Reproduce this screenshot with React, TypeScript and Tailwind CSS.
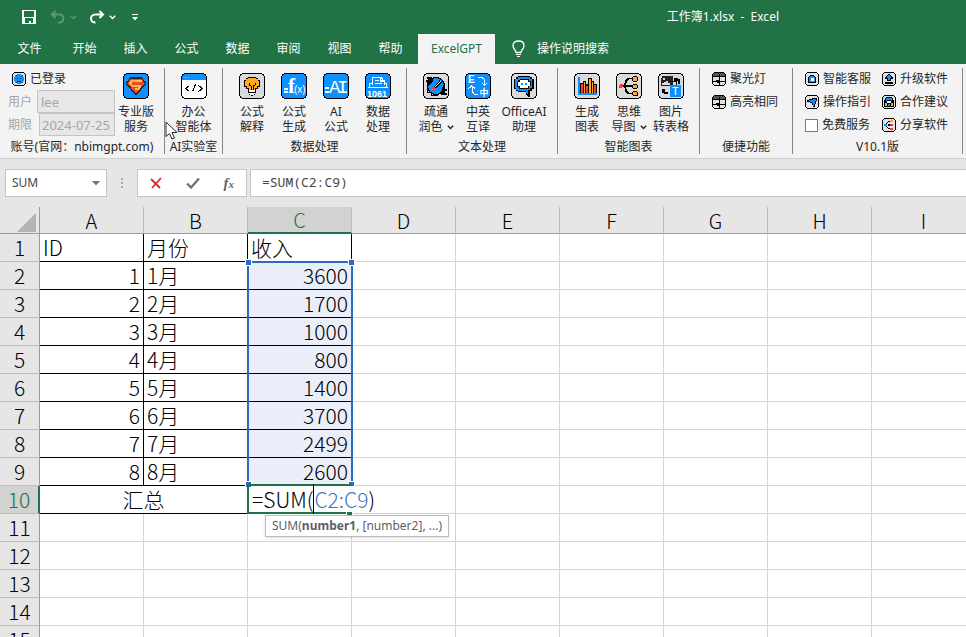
import type { ReactNode } from 'react';
import clsx from 'clsx';

const BLUE = '#0d90ff';
const GREY = '#dadada';

const tabs = ['开始', '插入', '公式', '数据', '审阅', '视图', '帮助'];
const columns = ['A', 'B', 'C', 'D', 'E', 'F', 'G', 'H', 'I'];
const income = ['3600', '1700', '1000', '800', '1400', '3700', '2499', '2600'];
const emptyRows = [11, 12, 13, 14, 15];

/* ---------- icons ---------- */

function Tile({ fill, children }: { fill: string; children: ReactNode }) {
  return (
    <svg width="26" height="26" viewBox="0 0 26 26" fill="none" shapeRendering="crispEdges" aria-hidden="true">
      <path d="M3 0h20v1h2v2h1v20h-1v2h-2v1H3v-1H1v-2H0V3h1V1h2z" fill="#000" />
      <path d="M3 1h20v1h1v1h1v20h-1v1h-1v1H3v-1H2v-1H1V3h1V2h1z" fill={fill} />
      {children}
    </svg>
  );
}

function SmallTile({ children }: { children: ReactNode }) {
  return (
    <svg width="14" height="14" viewBox="0 0 14 14" fill="none" shapeRendering="crispEdges" className="shrink-0" aria-hidden="true">
      <path d="M2 0h10v1h1v1h1v10h-1v1h-1v1H2v-1H1v-1H0V2h1V1h1z" fill="#000" />
      <path d="M2 1h10v1h1v10h-1v1H2v-1H1V2h1z" fill="#e2e2e2" />
      {children}
    </svg>
  );
}

const ShieldIcon = () => (
  <Tile fill={BLUE}>
    <path d="M7.5 5h11l4 5.500L13 22 3.500 10.500z" fill="#f04438" stroke="#222" strokeWidth="1.3" />
    <path d="M19 7.500H9.500L7 10l2 2.500h8l.5 1.500-2 1.500h-4" stroke="#ffc02e" strokeWidth="2" />
  </Tile>
);

const CodeIcon = () => (
  <Tile fill="#fff">
    <path d="M1 7V3h1V2h1V1h20v1h1v1h1v4z" fill={BLUE} />
    <path d="M4 4.500h1M7 4.500h1" stroke="#ffb27a" />
    <path d="M8.500 12.500l-3.500 3 3.500 3M17.500 12.500l3.500 3-3.500 3M14.500 11.500l-3 7" stroke="#000" strokeWidth="1.2" />
  </Tile>
);

const BulbIcon = () => (
  <Tile fill={GREY}>
    <path d="M9 4h8v1h2v2h2v7h-2v2h-2v2H9v-2H7v-2H5V7h2V5h2z" fill="#000" />
    <path d="M9 5h8v1h2v2h1v5h-2v2h-2v2h-6v-2H8v-2H6V8h1V6h2z" fill="#ffac1c" />
    <path d="M10 10v2l2 1v4M16 10v2l-2 1v4" stroke="#000" />
    <path d="M9 17h8v3h-1v2h-2v1h-2v-1h-2v-2H9z" fill="#000" />
    <path d="M10 17h6v2h-6zM10 20h6v1h-1v1h-4v-1h-1z" fill="#fff" />
  </Tile>
);

const FormulaIcon = () => (
  <Tile fill={BLUE}>
    <path d="M3 15h4v2H3zM3 18h4v2H3z" fill="#fff" />
    <text x="7" y="20" fill="#fff" fontSize="21" fontWeight="bold" fontFamily="Liberation Serif, serif">f</text>
    <text x="13" y="20" fill="#fff" fontSize="10" fontFamily="Liberation Sans, sans-serif">(x)</text>
  </Tile>
);

const AiIcon = () => (
  <Tile fill={BLUE}>
    <path d="M2 14h4v2H2zM2 18h4v2H2z" fill="#fff" />
    <text x="6" y="20" fill="#fff" fontSize="19" fontFamily="Liberation Mono, monospace">A</text>
    <text x="14" y="20" fill="#fff" fontSize="19" fontFamily="Liberation Mono, monospace">I</text>
    <path d="M23 18h1v2h-1z" fill="#fff" />
  </Tile>
);

const DataIcon = () => (
  <Tile fill={BLUE}>
    <path d="M7.500 12V4.500h8l2 1v2h2V12M15.500 4v4h4M10 7.500h4M10 10.500h7M7 10.500H4.500v4M19 10.500h2.500v4M3 14.500h20" stroke="#fff" strokeWidth="1.2" />
    <text x="2" y="24" fill="#fff" fontSize="9" fontFamily="Liberation Sans, sans-serif" fontWeight="bold">1061</text>
  </Tile>
);

const PolishIcon = () => (
  <Tile fill={GREY}>
    <circle cx="13" cy="13" r="8.500" fill={BLUE} stroke="#000" strokeWidth="1.2" />
    <path d="M4 4h4l2 1v3L6 12H4V9H3V7h2V6H4zM16 20l3-3 1-5h2v4h2v2h-2v2h2v2h-5z" fill="#000" />
    <path d="M5.500 8.500q0 3-1 6v5h4v3h6l2-2" stroke="#000" strokeWidth="1.2" />
    <path d="M10 17l8-9" stroke="#000" strokeWidth="3" />
    <path d="M12 14l6-6" stroke="#fff" />
    <path d="M10 14h2v1h1v2h-1v1h-2v-1H9v-2h1z" fill="#ef3f57" />
  </Tile>
);

const TranslateIcon = () => (
  <Tile fill={BLUE}>
    <path d="M3.500 15.500l3-2.500 4 2.500M7.500 13.500V19l2 2.500H13M13 4.500h4l2.500 2v6M17 10l2.500 2.500L22 10" stroke="#fff" strokeWidth="1.2" />
    <text x="3" y="10" fill="#fff" fontSize="10" fontWeight="bold" fontFamily="Liberation Sans, sans-serif">E</text>
    <text x="14.500" y="22.500" fill="#fff" fontSize="9" fontWeight="bold" fontFamily="'Noto Sans CJK SC', sans-serif">中</text>
  </Tile>
);

const ChatIcon = () => (
  <Tile fill={GREY}>
    <path d="M7 3h12v1h2v2h2v10h-2v2h-2v6h-2l-2-2v-3H7v-1H5v-2H3V6h2V4h2z" fill="#000" />
    <path d="M7 4h12v2h2v9h-2v2h-2v5l-2-2v-2H7v-1H5v-2H4V6h3z" fill={BLUE} />
    <path d="M9 6h9v2h2v5h-2v3H8v-2H6V9h1V7h2z" fill="#000" />
    <path d="M9 7h8v2h2v4h-2v2H9v-2H7V9h2z" fill="#fff" />
    <path d="M10 10h2v2h-2zM14 10h2v2h-2z" fill={BLUE} />
  </Tile>
);

const ChartIcon = () => (
  <Tile fill={GREY}>
    <path d="M6 10h4v10H6zM9 8h3v12H9zM12 11h3v9h-3zM14 5h4v15h-4zM17 8h3v12h-3zM19 11h4v9h-4z" fill="#000" />
    <path d="M7 11h2v9H7zM12 13h2v7h-2zM20 12h2v8h-2z" fill="#ef3f44" />
    <path d="M10 9h1v11h-1zM15 6h2v14h-2zM18 9h1v11h-1z" fill="#ffac1c" />
    <path d="M4 4h2v16h17v2H4z" fill={BLUE} />
  </Tile>
);

const MindMapIcon = () => (
  <Tile fill={GREY}>
    <path d="M6 13h12M18 5.500h-5l-3 2-1 5 1 6 3 2h5" stroke="#000" strokeWidth="1.8" />
    <circle cx="5" cy="13" r="2" fill="#ef3f44" />
    <path d="M17 3h4v1h1v4h-1v1h-4V8h-1V4h1zM17 11h4v1h1v3h-1v1h-4v-1h-1v-3h1zM17 18h4v1h1v4h-5v-1h-1v-3h1z" fill="#000" />
    <path d="M17 4h4v4h-4zM17 12h4v3h-4zM17 19h4v3h-4z" fill="#ffac1c" />
  </Tile>
);

const PictureIcon = () => (
  <Tile fill={GREY}>
    <path d="M4 3h11v10H3V5h1z" fill="#222" />
    <path d="M5 5h2v2H5zM4 12v-2h2V9h2V8h2v2h2v2z" fill="#ddd" />
    <path d="M16 5h4v1h2v5h-2V8h-4zM4 16h3v3h3v2H6v-1H4z" fill="#000" />
    <path d="M15 8.500h3V12" stroke="#000" />
    <rect x="12" y="12" width="11" height="12" fill={BLUE} />
    <text x="14" y="22" fill="#fff" fontSize="11" fontFamily="Liberation Sans, sans-serif">T</text>
  </Tile>
);

const LoginIcon = () => (
  <SmallTile>
    <path d="M5 2h4v1h2v2h1v4h-1v2H9v1H5v-1H3V9H2V5h1V3h2z" fill={BLUE} />
    <path d="M3.500 3.500h1M9.500 3.500h1M5 6.500h1M8 6.500h1M5 9.500h4M3.500 10.500h1M9.500 10.500h1" stroke="#0a2a52" />
  </SmallTile>
);

const GridIcon = () => (
  <SmallTile>
    <path d="M1 4V2h1V1h10v1h1v2z" fill="#555" />
    <path d="M1 4.500h12M1 9.500h12M7.500 2v11" stroke="#000" />
    <path d="M4 8h3v3H5v-1H4z" fill="#000" />
  </SmallTile>
);

const RobotIcon = () => (
  <SmallTile>
    <path d="M3 11V5h1V4h1V3h4v1h1v1h1v6z" fill="#000" />
    <path d="M4 10V5h1V4h4v1h1v5z" fill={BLUE} />
    <path d="M6 6h3v3H6z" fill="#fff" />
  </SmallTile>
);

const GuideIcon = () => (
  <SmallTile>
    <path d="M2 5h2V4h3V3h5v3h-1v3h-1v3H8v-2H7V8H5V7H2z" fill="#000" />
    <path d="M4 6V5h4V4h3v2h-1v3H9v2H8V8H7V7H5z" fill={BLUE} />
  </SmallTile>
);

const UploadIcon = () => (
  <SmallTile>
    <path d="M6 2h2v1h1v1h1v1h1v2H9v2H5V7H3V5h1V4h1V3h1z" fill="#000" />
    <path d="M6 3h2v1h1v2H8v2H6V6H5V4h1z" fill={BLUE} />
    <path d="M3 10h8v2H3z" fill="#000" />
  </SmallTile>
);

const PartnerIcon = () => (
  <SmallTile>
    <path d="M4 2h6v1h1v2h1v7H2V5h1V3h1z" fill="#000" />
    <path d="M4 3h6v3H9V5H5v1H4zM6 9h2v2H6z" fill={BLUE} />
    <path d="M5 6h4v2H5z" fill="#fff" />
    <path d="M3 8h2v3H3zM9 8h2v3H9z" fill="#ffac1c" />
  </SmallTile>
);

const ShareIcon = () => (
  <SmallTile>
    <path d="M8 3.500H6.500L4 6v2l2.500 2.500H8M6 7h2" stroke="#000" strokeWidth="1.2" />
    <path d="M2 6h3v2H2z" fill={BLUE} />
    <path d="M8 2h3v2H8z" fill="#ffac1c" />
    <path d="M8 6h3v2H8zM8 10h3v2H8z" fill="#e8384f" />
  </SmallTile>
);

const Chevron = () => (
  <svg width="7" height="5" viewBox="0 0 7 5" fill="none" className="inline-block" aria-hidden="true">
    <path d="M0.8 0.8L3.500 3.500 6.200 0.8" stroke="currentColor" strokeWidth="1.4" />
  </svg>
);

/* ---------- ribbon ---------- */

function Group({ title, className, children }: { title: string; className: string; children: ReactNode }) {
  return (
    <section className={clsx('flex shrink-0 flex-col border-r border-[#868686]', className)}>
      <div className="h-[73px] pt-1">{children}</div>
      <h2 className="text-center leading-[14px] whitespace-nowrap">{title}</h2>
    </section>
  );
}

type BigProps = { icon: ReactNode; lines: [string, string]; menu?: boolean; className?: string };

function BigButton({ icon, lines, menu, className = 'w-[42px]' }: BigProps) {
  return (
    <button className={clsx('flex shrink-0 flex-col items-center gap-[5px] pt-px', className)}>
      {icon}
      <span className="leading-[15px] whitespace-nowrap">
        {lines[0]}
        <br />
        {lines[1]}
        {menu && <span className="ml-1 inline-flex align-middle"><Chevron /></span>}
      </span>
    </button>
  );
}

function SmallButton({ icon, label }: { icon: ReactNode; label: string }) {
  return (
    <button className="flex h-[14px] items-center gap-1 leading-[14px] whitespace-nowrap">
      {icon}
      {label}
    </button>
  );
}

function Ribbon() {
  return (
    <div className="flex h-[95px] overflow-hidden border-b border-[#cfcfcf] bg-[#f3f3f3] pt-1 pb-1 text-[#262626]">
      <Group title="账号(官网：nbimgpt.com)" className="w-[165px]">
        <div className="flex pr-[7px] pl-2">
          <div className="flex w-[107px] shrink-0 flex-col">
            <div className="mb-1 pl-1">
              <SmallButton icon={<LoginIcon />} label="已登录" />
            </div>
            <div className="flex items-center justify-between text-[#a6a6a6]">
              <label htmlFor="user">用户</label>
              <input id="user" disabled defaultValue="lee" className="h-[23px] w-[78px] border border-[#c4c4c4] bg-[#e7e7e7] px-[3px] text-[13px]" />
            </div>
            <div className="flex items-center justify-between text-[#a6a6a6]">
              <label htmlFor="expiry">期限</label>
              <input id="expiry" disabled defaultValue="2024-07-25" className="h-[23px] w-[76px] border border-[#c4c4c4] bg-[#e7e7e7] px-[2px] text-[13px]" />
            </div>
          </div>
          <BigButton icon={<ShieldIcon />} lines={['专业版', '服务']} />
        </div>
      </Group>
      <Group title="AI实验室" className="w-[58px]">
        <div className="flex justify-center">
          <BigButton icon={<CodeIcon />} lines={['办公', '智能体']} />
        </div>
      </Group>
      <Group title="数据处理" className="w-[184px]">
        <div className="flex pl-2">
          <BigButton icon={<BulbIcon />} lines={['公式', '解释']} />
          <BigButton icon={<FormulaIcon />} lines={['公式', '生成']} />
          <BigButton icon={<AiIcon />} lines={['AI', '公式']} />
          <BigButton icon={<DataIcon />} lines={['数据', '处理']} />
        </div>
      </Group>
      <Group title="文本处理" className="w-[151px]">
        <div className="flex pl-2">
          <BigButton icon={<PolishIcon />} lines={['疏通', '润色']} menu />
          <BigButton icon={<TranslateIcon />} lines={['中英', '互译']} />
          <BigButton icon={<ChatIcon />} lines={['OfficeAI', '助理']} className="w-[50px]" />
        </div>
      </Group>
      <Group title="智能图表" className="w-[142px]">
        <div className="flex pl-2">
          <BigButton icon={<ChartIcon />} lines={['生成', '图表']} />
          <BigButton icon={<MindMapIcon />} lines={['思维', '导图']} menu />
          <BigButton icon={<PictureIcon />} lines={['图片', '转表格']} />
        </div>
      </Group>
      <Group title="便捷功能" className="w-[93px]">
        <div className="flex flex-col gap-[9px] pl-3">
          <SmallButton icon={<GridIcon />} label="聚光灯" />
          <SmallButton icon={<GridIcon />} label="高亮相同" />
        </div>
      </Group>
      <Group title="V10.1版" className="w-[170px]">
        <div className="flex gap-[11px] pl-3">
          <div className="flex flex-col gap-[9px]">
            <SmallButton icon={<RobotIcon />} label="智能客服" />
            <SmallButton icon={<GuideIcon />} label="操作指引" />
            <label className="flex h-[14px] items-center gap-1 whitespace-nowrap">
              <input type="checkbox" className="size-[13px] appearance-none border border-[#7a7a7a] bg-white" />
              免费服务
            </label>
          </div>
          <div className="flex flex-col gap-[9px]">
            <SmallButton icon={<UploadIcon />} label="升级软件" />
            <SmallButton icon={<PartnerIcon />} label="合作建议" />
            <SmallButton icon={<ShareIcon />} label="分享软件" />
          </div>
        </div>
      </Group>
    </div>
  );
}

/* ---------- title bar and tabs ---------- */

function TitleBar() {
  return (
    <header className="flex h-[34px] items-center pl-[22px] text-white">
      <button aria-label="保存">
        <svg width="14" height="14" viewBox="0 0 14 14" shapeRendering="crispEdges">
          <path fillRule="evenodd" d="M0 0h14v14H0zM2 1h10v6H2zM2 8h10v5H9v-2H7v2H3V9H2z" fill="#fff" />
          <path d="M2 8h1v5H2zM11 8h1v5h-1z" fill="#fff" />
        </svg>
      </button>
      <button aria-label="撤消" className="ml-[14px] text-[#5b9877]">
        <svg width="16" height="14" viewBox="0 0 16 14" fill="none">
          <path d="M5.500 1L2 4.500 5.500 8M2 4.500h7.500c5 0 5 8 0 8H8" stroke="currentColor" strokeWidth="2" />
        </svg>
      </button>
      <button aria-label="撤消选项" className="ml-1 flex text-[#5b9877]"><Chevron /></button>
      <button aria-label="恢复" className="ml-3">
        <svg width="16" height="14" viewBox="0 0 16 14" fill="none">
          <path d="M10.500 1L14 4.500 10.500 8M14 4.500H6.500c-6 0-6 8 0 8" stroke="#fff" strokeWidth="2" />
        </svg>
      </button>
      <button aria-label="恢复选项" className="ml-1 flex"><Chevron /></button>
      <button aria-label="自定义快速访问工具栏" className="ml-4">
        <svg width="6" height="7" viewBox="0 0 6 7">
          <path d="M0 0h6v1H0zM0 3h6L3 6.500z" fill="#fff" />
        </svg>
      </button>
      <h1 className="mr-[187px] ml-auto whitespace-pre">工作簿1.xlsx  -  Excel</h1>
    </header>
  );
}

function TabBar() {
  return (
    <nav className="flex h-[30px] items-stretch pr-4 text-white">
      <button className="w-[59px] pb-px">文件</button>
      {tabs.map((tab) => (
        <button key={tab} className="w-[51px] pb-px">{tab}</button>
      ))}
      <button className="ml-[2px] w-[77px] bg-[#f3f3f3] pb-px text-[#217346]">ExcelGPT</button>
      <button className="ml-[17px] flex items-center gap-3 pb-px">
        <svg width="13" height="17" viewBox="0 0 13 17" fill="none" aria-hidden="true">
          <path d="M4 12.500c0-2.500-3-3.500-3-7C1 2.500 3.500 1 6.500 1S12 2.500 12 5.500c0 3.500-3 4.500-3 7z" stroke="#fff" strokeWidth="1.3" />
          <path d="M4 14.500h5M5 16.500h3" stroke="#fff" />
        </svg>
        操作说明搜索
      </button>
    </nav>
  );
}

/* ---------- formula bar ---------- */

function FormulaBar() {
  return (
    <div className="flex h-12 items-center bg-[#e6e6e6] pl-[5px] text-[#444]">
      <div className="flex h-7 w-[102px] items-center border border-[#c6c6c6] bg-white">
        <input aria-label="名称框" defaultValue="SUM" className="min-w-0 flex-1 pl-[6px] outline-none" />
        <button aria-label="名称列表" className="px-[6px]">
          <svg width="8" height="5" viewBox="0 0 8 5"><path d="M0 0h8L4 4.500z" fill="#777" /></svg>
        </button>
      </div>
      <svg width="2" height="10" viewBox="0 0 2 10" className="mx-[14px]" aria-hidden="true">
        <path d="M0 0h2v2H0zM0 4h2v2H0zM0 8h2v2H0z" fill="#aaa" />
      </svg>
      <div className="flex h-7 w-[110px] items-center justify-between border border-[#c6c6c6] bg-white px-3">
        <button aria-label="取消">
          <svg width="12" height="12" viewBox="0 0 12 12" fill="none">
            <path d="M1 2l9 9M11 1L2 11" stroke="#d42a2a" strokeWidth="1.8" />
          </svg>
        </button>
        <button aria-label="输入">
          <svg width="14" height="12" viewBox="0 0 14 12" fill="none">
            <path d="M1 6.500l4 4L13 1.500" stroke="#737373" strokeWidth="2.4" />
          </svg>
        </button>
        <button aria-label="插入函数" className="font-['Liberation_Serif',serif] text-[15px] leading-4 font-bold text-[#666] italic">
          f<span className="text-[11px]">x</span>
        </button>
      </div>
      <input
        aria-label="编辑栏"
        defaultValue="=SUM(C2:C9)"
        className="ml-[3px] h-7 min-w-0 flex-1 border border-r-0 border-[#c6c6c6] bg-white pb-[2px] pl-[11px] font-['Noto_Sans_Mono','DejaVu_Sans_Mono',monospace] text-[13px] outline-none"
      />
    </div>
  );
}

/* ---------- sheet ---------- */

const cell = 'h-7 border-r border-b p-0 px-[3px] leading-[27px] whitespace-nowrap';
const filled = 'border-black';
const blank = 'border-[#d4d4d4]';

function RowHeader({ n, active }: { n: number; active?: boolean }) {
  return (
    <th
      scope="row"
      className={clsx(
        'h-7 border-b border-b-[#bdbdbd] p-0 leading-[27px] font-light',
        active ? 'border-r-2 border-r-[#217346] bg-[#d2d2d2] text-[#217346]' : 'border-r border-r-[#9b9b9b] bg-[#e6e6e6]',
      )}
    >
      {n}
    </th>
  );
}

function BlankCells({ count }: { count: number }) {
  return Array.from({ length: count }, (_, i) => <td key={i} className={clsx(cell, blank)} />);
}

function Handle({ className }: { className: string }) {
  return <span className={clsx('absolute size-[5px] bg-[#2f68bf] outline-1 outline-white', className)} />;
}

function RangeOutline() {
  return (
    <div className="pointer-events-none absolute -top-px -right-[2px] -left-px z-10 h-[225px] border-2 border-[#2f68bf]">
      <Handle className="-top-[3px] -left-[3px]" />
      <Handle className="-top-[3px] -right-[3px]" />
      <Handle className="-bottom-[3px] -left-[3px]" />
      <Handle className="-right-[3px] -bottom-[3px]" />
    </div>
  );
}

function EditingCell() {
  return (
    <td className={clsx(cell, 'relative', blank)}>
      <div className="absolute -top-[2px] -right-px -bottom-px -left-px z-10 border-2 border-[#217346]">
        <span className="absolute -right-[2px] -bottom-[3px] size-[5px] bg-[#217346] outline-1 outline-white" />
      </div>
      <div className="absolute top-0 left-1 z-20 h-[26px] bg-white leading-[27px]">
        =SUM(<span className="border-l border-black text-[#3b74c6]">C2:C9</span>)
      </div>
      <div className="absolute top-[29px] left-[17px] z-30 border border-[#bcbcbc] bg-white px-[6px] pb-px font-['Noto_Sans',sans-serif] text-xs leading-[19px] font-normal text-[#5f5f5f] shadow-sm">
        SUM(<b>number1</b>, [number2], ...)
      </div>
    </td>
  );
}

function Sheet() {
  return (
    <main className="flex-1 overflow-hidden bg-white">
      <table className="w-[1016px] table-fixed border-separate border-spacing-0 font-['Noto_Sans_CJK_SC',sans-serif] text-[21px] font-light text-black">
        <colgroup>
          <col className="w-10" />
          {columns.map((c) => <col key={c} className="w-[104px]" />)}
          <col className="w-10" />
        </colgroup>
        <thead className="text-xl">
          <tr>
            <th className="h-[27px] border-r border-b border-[#9b9b9b] bg-[#e6e6e6] p-0">
              <svg width="19" height="19" viewBox="0 0 19 19" className="mt-1 ml-[17px]" aria-hidden="true">
                <path d="M19 0v19H0z" fill="#b3b3b3" />
              </svg>
            </th>
            {columns.map((c) => (
              <th
                key={c}
                scope="col"
                className={clsx(
                  'h-[27px] border-r border-r-[#bdbdbd] p-0 leading-[25px] font-light',
                  c === 'C' ? 'border-b-2 border-b-[#217346] bg-[#d2d2d2] text-[#217346]' : 'border-b border-b-[#9b9b9b] bg-[#e6e6e6]',
                )}
              >
                {c}
              </th>
            ))}
            <th className="border-b border-[#9b9b9b] bg-[#e6e6e6]" />
          </tr>
        </thead>
        <tbody>
          <tr>
            <RowHeader n={1} />
            <td className={clsx(cell, filled)}>ID</td>
            <td className={clsx(cell, filled)}>月份</td>
            <td className={clsx(cell, filled)}>收入</td>
            <BlankCells count={7} />
          </tr>
          {income.map((value, i) => (
            <tr key={i}>
              <RowHeader n={i + 2} />
              <td className={clsx(cell, filled, 'text-right')}>{i + 1}</td>
              <td className={clsx(cell, filled)}>{i + 1}月</td>
              <td className={clsx(cell, filled, 'relative bg-[#e9eef9] text-right')}>
                {value}
                {i === 0 && <RangeOutline />}
              </td>
              <BlankCells count={7} />
            </tr>
          ))}
          <tr>
            <RowHeader n={10} active />
            <td colSpan={2} className={clsx(cell, filled, 'text-center')}>汇总</td>
            <EditingCell />
            <BlankCells count={7} />
          </tr>
          {emptyRows.map((n) => (
            <tr key={n}>
              <RowHeader n={n} />
              <BlankCells count={10} />
            </tr>
          ))}
        </tbody>
      </table>
    </main>
  );
}

export default function App() {
  return (
    <div className="relative flex h-screen flex-col overflow-hidden font-['Noto_Sans','Noto_Sans_CJK_SC',sans-serif] text-xs">
      <div className="bg-[#217346]">
        <TitleBar />
        <TabBar />
      </div>
      <Ribbon />
      <FormulaBar />
      <Sheet />
      {/* Mouse pointer */}
      <svg width="13" height="19" viewBox="0 0 13 19" className="pointer-events-none absolute top-[121px] left-[165px] z-40" aria-hidden="true">
        <path d="M1 1v14.500l3.500-3 2.500 5.500 2.500-1-2.500-5.500H12z" fill="#fff" stroke="#222" />
      </svg>
    </div>
  );
}
